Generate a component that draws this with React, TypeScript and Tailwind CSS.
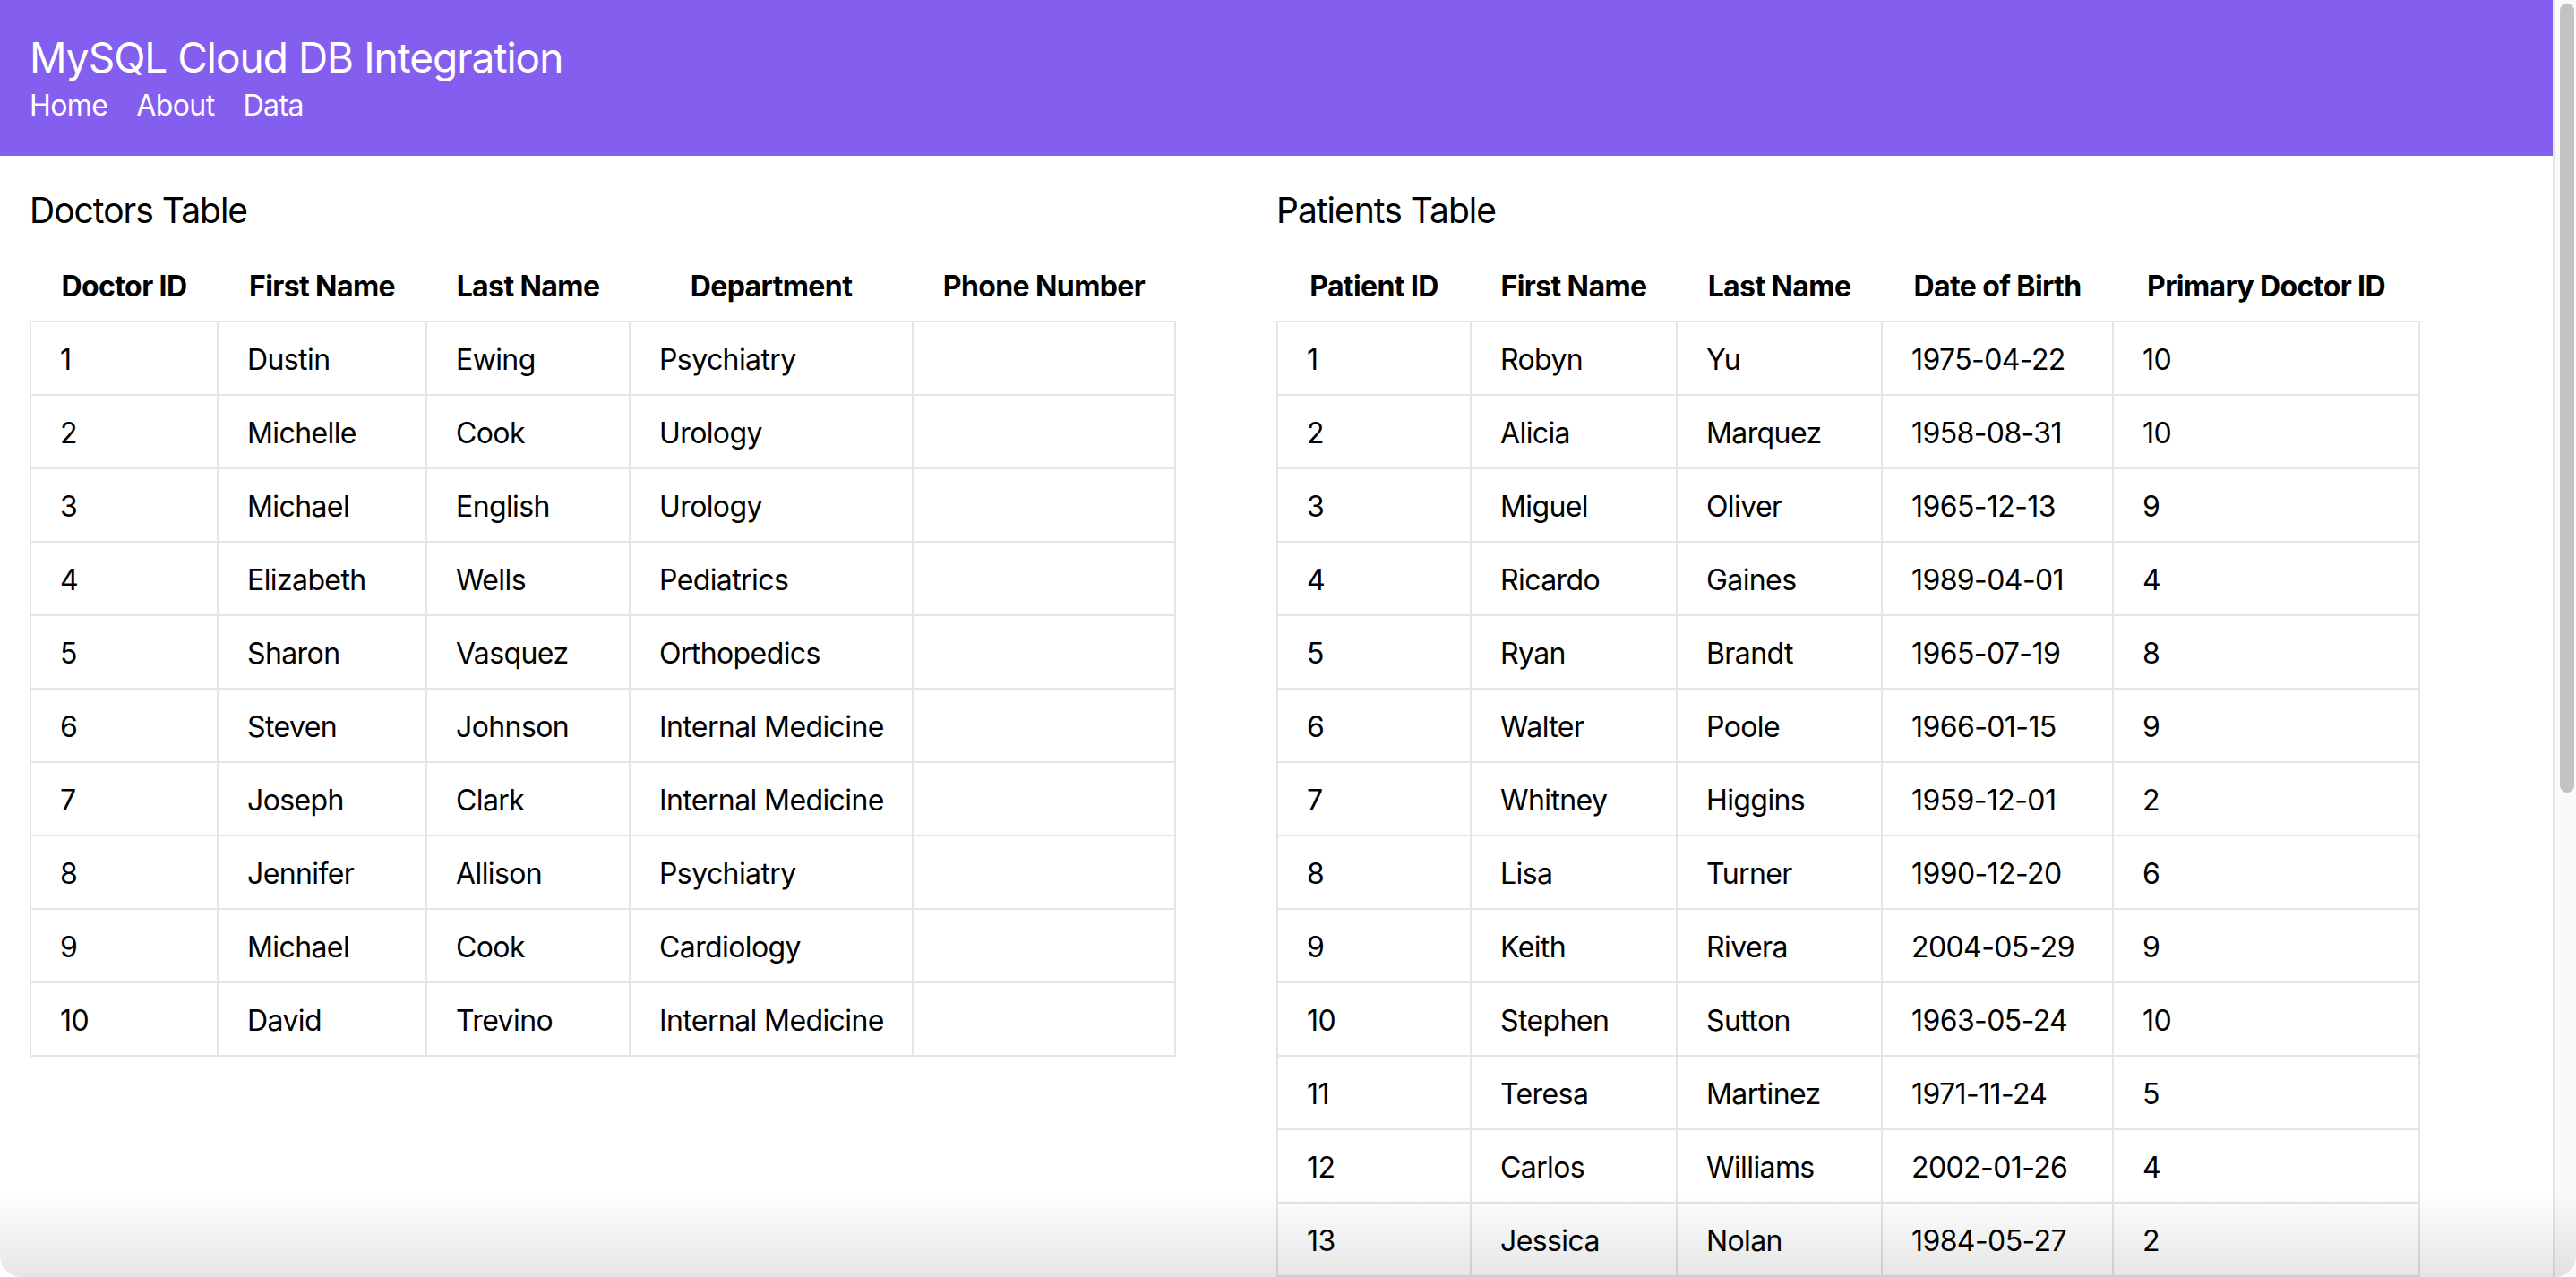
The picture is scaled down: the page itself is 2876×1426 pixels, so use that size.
import React from "react";

const doctors = [
  [1, "Dustin", "Ewing", "Psychiatry"],
  [2, "Michelle", "Cook", "Urology"],
  [3, "Michael", "English", "Urology"],
  [4, "Elizabeth", "Wells", "Pediatrics"],
  [5, "Sharon", "Vasquez", "Orthopedics"],
  [6, "Steven", "Johnson", "Internal Medicine"],
  [7, "Joseph", "Clark", "Internal Medicine"],
  [8, "Jennifer", "Allison", "Psychiatry"],
  [9, "Michael", "Cook", "Cardiology"],
  [10, "David", "Trevino", "Internal Medicine"],
];

const patients = [
  [1, "Robyn", "Yu", "1975-04-22", 10],
  [2, "Alicia", "Marquez", "1958-08-31", 10],
  [3, "Miguel", "Oliver", "1965-12-13", 9],
  [4, "Ricardo", "Gaines", "1989-04-01", 4],
  [5, "Ryan", "Brandt", "1965-07-19", 8],
  [6, "Walter", "Poole", "1966-01-15", 9],
  [7, "Whitney", "Higgins", "1959-12-01", 2],
  [8, "Lisa", "Turner", "1990-12-20", 6],
  [9, "Keith", "Rivera", "2004-05-29", 9],
  [10, "Stephen", "Sutton", "1963-05-24", 10],
  [11, "Teresa", "Martinez", "1971-11-24", 5],
  [12, "Carlos", "Williams", "2002-01-26", 4],
  [13, "Jessica", "Nolan", "1984-05-27", 2],
];

function DataTable({
  title,
  headers,
  widths,
  rows,
}: {
  title: string;
  headers: string[];
  widths: number[];
  rows: (string | number)[][];
}) {
  const total = widths.reduce((a, b) => a + b, 0);
  return (
    <section>
      <h2 className="text-[39px] leading-[56px] font-normal tracking-[-1px] text-black mb-[15px]">{title}</h2>
      <table
        className="table-fixed border-collapse text-[32px] leading-[48px] tracking-[-0.6px] text-black"
        style={{ width: total }}
      >
        <colgroup>
          {widths.map((w, i) => (
            <col key={i} style={{ width: w }} />
          ))}
        </colgroup>
        <thead>
          <tr>
            {headers.map((h) => (
              <th key={h} className="pt-[18px] pb-[14px] px-0 text-center font-bold whitespace-nowrap">
                {h}
              </th>
            ))}
          </tr>
        </thead>
        <tbody>
          {rows.map((r, ri) => (
            <tr key={ri}>
              {headers.map((_, ci) => (
                <td
                  key={ci}
                  className="border-2 border-[#e4e4e9] pt-[18px] pb-[14px] px-[32px] text-left whitespace-nowrap"
                >
                  {r[ci] ?? ""}
                </td>
              ))}
            </tr>
          ))}
        </tbody>
      </table>
    </section>
  );
}

export default function App() {
  return (
    <div
      className="relative flex h-screen w-full overflow-hidden bg-white"
      style={{ fontFamily: "Inter, 'Noto Sans', sans-serif" }}
    >
      <div className="flex-1 flex flex-col min-w-0">
        <header className="bg-[#845eee] text-white h-[174px] pt-[36px] px-[33px]">
          <h1 className="text-[46px] leading-[56px] font-normal tracking-[-1px]">MySQL Cloud DB Integration</h1>
          <nav className="flex gap-[32px] text-[32px] leading-[48px] tracking-[-0.6px] mt-[2px]">
            <span>Home</span>
            <span>About</span>
            <span>Data</span>
          </nav>
        </header>

        <main className="grid grid-cols-2 px-[33px] pt-[33px]">
          <DataTable
            title="Doctors Table"
            headers={["Doctor ID", "First Name", "Last Name", "Department", "Phone Number"]}
            widths={[209, 233, 227, 316, 293]}
            rows={doctors}
          />
          <DataTable
            title="Patients Table"
            headers={["Patient ID", "First Name", "Last Name", "Date of Birth", "Primary Doctor ID"]}
            widths={[216, 230, 229, 258, 342]}
            rows={patients}
          />
        </main>
      </div>

      {/* fake scrollbar */}
      <div className="w-[26px] shrink-0 bg-[#fafafa] border-l-2 border-[#e6e6e6] pt-[4px] pl-[6px] pr-[2px]">
        <div className="h-[881px] w-[16px] rounded-full bg-[#c2c2c2]" />
      </div>

      {/* window bottom shade */}
      <div className="pointer-events-none absolute inset-x-0 bottom-0 h-[96px] bg-gradient-to-b from-transparent to-black/10 rounded-b-[24px]" />
    </div>
  );
}
